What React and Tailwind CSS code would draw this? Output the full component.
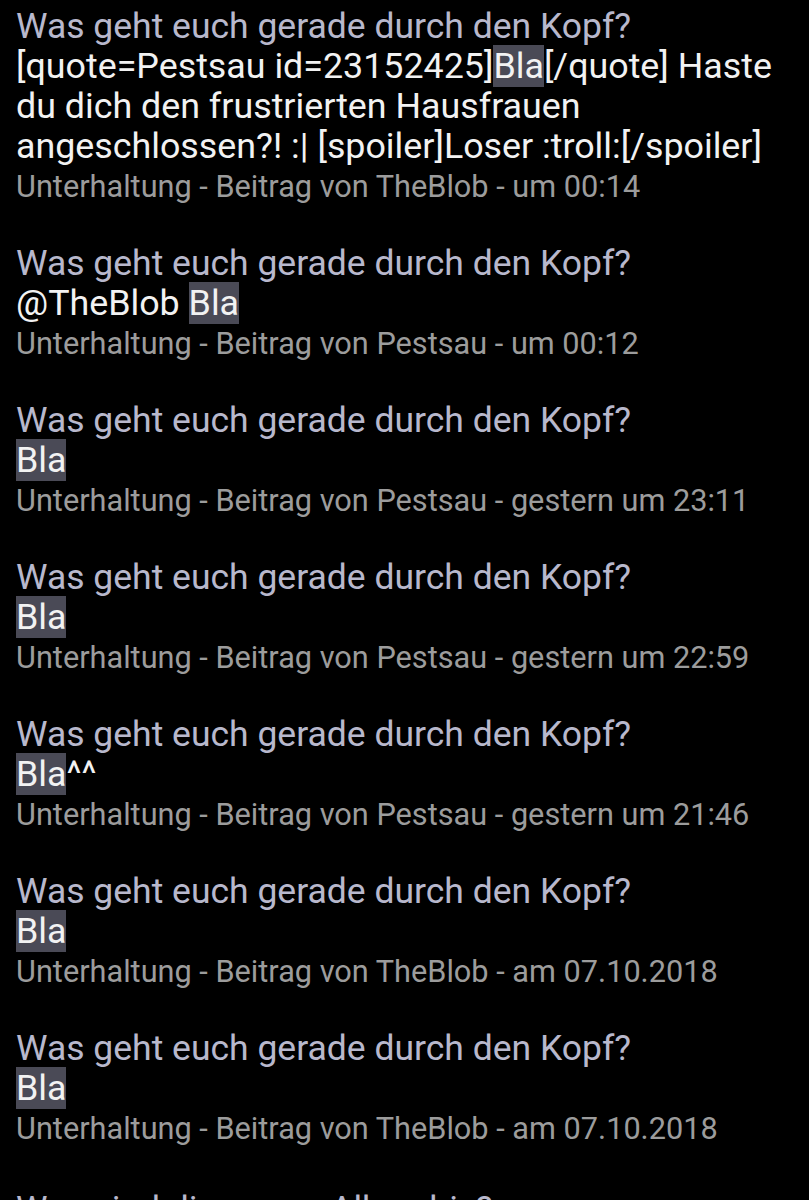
import React from "react";

const posts = [
  {
    id: 1,
    body: (
      <>
        [quote=Pestsau id=23152425]<span className="bg-[#4a4a56]">Bla</span>[/quote] Haste du dich den frustrierten Hausfrauen angeschlossen?! :| [spoiler]Loser :troll:[/spoiler]
      </>
    ),
    author: "TheBlob",
    time: "um 00:14",
  },
  {
    id: 2,
    body: (
      <>
        @TheBlob <span className="bg-[#4a4a56]">Bla</span>
      </>
    ),
    author: "Pestsau",
    time: "um 00:12",
  },
  { id: 3, body: <span className="bg-[#4a4a56]">Bla</span>, author: "Pestsau", time: "gestern um 23:11" },
  { id: 4, body: <span className="bg-[#4a4a56]">Bla</span>, author: "Pestsau", time: "gestern um 22:59" },
  {
    id: 5,
    body: (
      <>
        <span className="bg-[#4a4a56]">Bla</span>^^
      </>
    ),
    author: "Pestsau",
    time: "gestern um 21:46",
  },
  { id: 6, body: <span className="bg-[#4a4a56]">Bla</span>, author: "TheBlob", time: "am 07.10.2018" },
  { id: 7, body: <span className="bg-[#4a4a56]">Bla</span>, author: "TheBlob", time: "am 07.10.2018" },
];

const App = () => {
  return (
    <div
      className="h-[1200px] overflow-hidden bg-black pl-4 pr-4 pt-[6px] leading-10"
      style={{ fontFamily: "Roboto, 'Noto Sans', sans-serif" }}
    >
      {posts.map((post) => (
        <div key={post.id} className="mb-[37px]">
          <div className="text-[35.5px] text-[#b8b8cc]">Was geht euch gerade durch den Kopf?</div>
          <div className="text-[35.8px] text-[#f2f2f2]">{post.body}</div>
          <div className="pt-[2px] text-[30.7px] leading-[38px] text-[#9c9c9c]">
            Unterhaltung - Beitrag von {post.author} - {post.time}
          </div>
        </div>
      ))}
      <div className="pt-1 text-[35.5px] text-[#b8b8cc]">Was sind die neuen Alben bis?</div>
    </div>
  );
};

export default App;
